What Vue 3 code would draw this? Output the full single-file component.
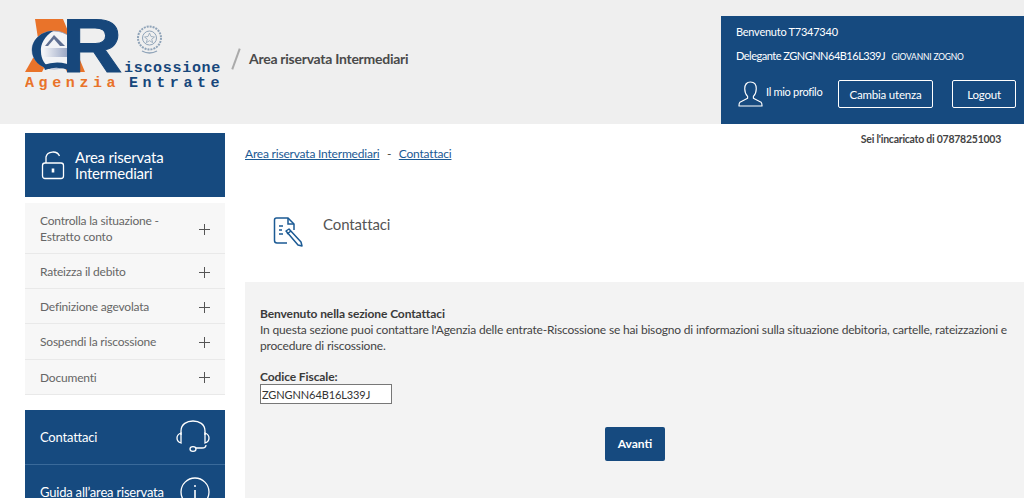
<template>
  <div class="page">
    <header class="top">
      <div class="brand">
        <svg class="logo" width="200" height="80" viewBox="0 0 200 80">
          <defs>
            <linearGradient id="eBar" x1="0" x2="1" y1="0" y2="0">
              <stop offset="0" stop-color="#f4f5f8" />
              <stop offset="1" stop-color="#7f8fb5" />
            </linearGradient>
          </defs>
          <path d="M10 4 H38 L60 57 H42 L30 30 H14 Z" fill="#e9732a" />
          <path d="M0 57 L8 43 L24 43 L17 57 Z" fill="#e9732a" />
          <ellipse cx="29" cy="35" rx="22" ry="19" fill="#f2f3f6" stroke="#8c9cbc" stroke-width=".8" />
          <path d="M7 35 C7 24 17 16 28 16 C20 21 15 29 16 37 C16 44 20 50 26 54 C15 53 7 45 7 35 Z" fill="#17477b" />
          <path d="M29 20 L40 31 L20 31 Z" fill="#5f6f92" />
          <path d="M29 24 L35 31 L23 31 Z" fill="#f2f3f6" />
          <rect x="18" y="33" width="32" height="9" fill="url(#eBar)" />
          <path d="M18 50 Q35 44 50 52 L46 56 Q32 50 20 55 Z" fill="#17477b" />
          <text transform="translate(37 57) scale(1.1 1)" class="logo-r">R</text>
          <text x="99" y="57" class="logo-small blue">iscossione</text>
          <text x="0" y="72" class="logo-small orange wide">Agenzia</text>
          <text x="104" y="72" class="logo-small blue wide">Entrate</text>
          <g fill="none" stroke="#8fa3b8" stroke-width="1.400">
            <circle cx="124.500" cy="23" r="11.500" stroke-width="2" stroke-dasharray="2 1" />
            <circle cx="124.500" cy="23" r="7" stroke-width="1" />
            <path d="M124.500 18 l1.500 3.500 3.500 .5 -2.800 2.200 1 3.500 -3.200 -2 -3.200 2 1 -3.500 -2.800 -2.200 3.500 -.5 Z" stroke-width=".8" />
            <path d="M117 36 q7.500 4 15 0" />
          </g>
        </svg>
        <span class="slash"></span>
        <span class="area-title">Area riservata Intermediari</span>
      </div>
      <div class="user-box">
        <p class="user-line welcome">Benvenuto T7347340</p>
        <p class="user-line">Delegante ZGNGNN64B16L339J <small>GIOVANNI ZOGNO</small></p>
        <div class="user-actions">
          <a class="profile">
            <svg width="25" height="26" viewBox="0 0 26 27" fill="none" stroke="#fff" stroke-width="1.200">
              <path d="M7 8 C7 3 10 1 13 1 C16 1 19 3 19 8 C19 12 17 15 16 16 L16 18 L24 22 Q25 23 25 26 L1 26 Q1 23 2 22 L10 18 L10 16 C9 15 7 12 7 8 Z" stroke-linejoin="round" />
            </svg>
            <span>Il mio profilo</span>
          </a>
          <button class="outline wide-btn">Cambia utenza</button>
          <button class="outline">Logout</button>
        </div>
      </div>
    </header>

    <div class="content">
      <aside class="side">
        <div class="side-head">
          <svg width="24" height="30" viewBox="0 0 24 30" fill="none" stroke="#fff" stroke-width="1.300">
            <rect x="1.500" y="13" width="21" height="15.500" rx="2.500" />
            <path d="M5 13 L5 7 A7 6 0 0 1 18.500 6" />
            <path d="M12 18.500 v4" stroke-width="2.600" />
          </svg>
          <span>Area riservata<br />Intermediari</span>
        </div>
        <ul class="menu">
          <li v-for="item in menu" :key="item" class="menu-item">
            <span>{{ item }}</span>
            <svg width="11" height="11" viewBox="0 0 11 11" stroke="#555" stroke-width="1"><path d="M5.500 0 V11 M0 5.500 H11" /></svg>
          </li>
        </ul>
        <div class="side-blue">
          <div class="blue-row first">
            <span>Contattaci</span>
            <svg width="34" height="34" viewBox="0 0 34 34" fill="none" stroke="#fff" stroke-width="1.300">
              <path d="M5 15 V11 C5 4 11 1 17 1 C23 1 29 4 29 11 V15" />
              <path d="M5 13 C2 14 1 16 1 18 C1 20 2 22 5 23 Z" />
              <path d="M29 13 C32 14 33 16 33 18 C33 20 32 22 29 23 Z" />
              <path d="M30 25 Q30 28 26 28 L20 28" />
              <ellipse cx="17" cy="29" rx="3" ry="2.300" />
            </svg>
          </div>
          <div class="blue-row">
            <span>Guida all’area riservata</span>
            <svg width="30" height="30" viewBox="0 0 30 30" fill="none" stroke="#fff" stroke-width="1.300">
              <circle cx="15" cy="15" r="14" />
              <path d="M15 13 V22" stroke-width="1.600" />
              <circle cx="15" cy="9" r="1" fill="#fff" stroke="none" />
            </svg>
          </div>
        </div>
      </aside>

      <main class="main">
        <p class="delegate">Sei l'incaricato di 07878251003</p>
        <nav class="crumbs">
          <a>Area riservata Intermediari</a>
          <span>-</span>
          <a>Contattaci</a>
        </nav>
        <div class="title-row">
          <svg width="30" height="30" viewBox="0 0 30 30" fill="none" stroke="#1b5a94" stroke-width="1.500">
            <path d="M14 26 L4 26 Q1.500 26 1.500 23.500 L1.500 3 Q1.500 1 3.500 1 L15 1 L21 7 L21 13" />
            <path d="M15 1 L15 7 L21 7" />
            <path d="M6 9 H10 M6 13 H9 M6 17 H10" />
            <path d="M13 14 L16 12 L28 25 L29 29 L25 28 Z" stroke-linejoin="round" />
            <path d="M14 17 L18 14" />
          </svg>
          <h1>Contattaci</h1>
        </div>
        <section class="panel">
          <strong>Benvenuto nella sezione Contattaci</strong>
          <p>In questa sezione puoi contattare l'Agenzia delle entrate-Riscossione se hai bisogno di informazioni sulla situazione debitoria, cartelle, rateizzazioni e procedure di riscossione.</p>
          <label for="cf">Codice Fiscale:</label>
          <input id="cf" value="ZGNGNN64B16L339J" />
          <div class="submit"><button class="primary">Avanti</button></div>
        </section>
      </main>
    </div>
  </div>
</template>

<script setup>
const menu = [
  'Controlla la situazione - Estratto conto',
  'Rateizza il debito',
  'Definizione agevolata',
  'Sospendi la riscossione',
  'Documenti'
]
</script>

<style>
html, body { margin: 0; overflow: hidden; background: #fff; }
</style>

<style scoped>
.page {
  height: 498px;
  overflow: hidden;
  font-family: Lato, "Open Sans", sans-serif;
  font-size: 12px;
  color: #444;
}

.top {
  display: flex;
  justify-content: space-between;
  align-items: flex-end;
  height: 124px;
  background: #efefef;
}

.brand {
  display: flex;
  align-items: flex-start;
  align-self: flex-start;
  padding: 15px 0 0 25px;
}

.logo { display: block; }
.logo-r { font: bold 76px "Liberation Sans", sans-serif; fill: #17477b; stroke: #17477b; stroke-width: 1px; }
.logo-small { font: bold 15px "Liberation Mono", monospace; letter-spacing: .7px; }
.logo-small.wide { letter-spacing: 4.600px; }
.blue { fill: #17477b; }
.orange { fill: #e9732a; }

.slash {
  width: 2px;
  height: 22px;
  margin: 33px 0 0 10px;
  background: #aaa;
  transform: rotate(20deg);
}

.area-title {
  margin: 35px 0 0 12px;
  font-size: 14px;
  font-weight: 700;
  letter-spacing: -.27px;
  color: #4a4a4a;
}

.user-box {
  box-sizing: border-box;
  width: 303px;
  height: 108px;
  padding: 9px 8px 0 15px;
  background: #164a7f;
  color: #fff;
}

.user-line {
  margin: 0 0 10px;
  line-height: 14px;
  font-size: 11px;
  letter-spacing: -.5px;
}

.user-line.welcome { letter-spacing: -.25px; }

.user-line small { margin-left: 4px; font-size: 8.500px; letter-spacing: -.2px; }

.user-actions {
  display: flex;
  align-items: center;
  margin-top: 16px;
}

.profile {
  display: flex;
  align-items: flex-start;
  gap: 3px;
  width: 102px;
  margin-left: 2px;
  margin-right: -2px;
  font-size: 11px;
  letter-spacing: -.3px;
}

.profile span { margin-top: 4px; }

.outline {
  width: 64px;
  height: 28px;
  margin-left: auto;
  border: 1px solid #fff;
  border-radius: 2px;
  background: transparent;
  color: #fff;
  font: inherit;
  font-size: 11.500px;
  letter-spacing: -.2px;
}

.wide-btn { width: 95px; margin: 0; }

.content {
  display: flex;
  gap: 20px;
  padding-left: 25px;
}

.side {
  flex: none;
  width: 200px;
  padding-top: 9px;
}

.side-head {
  display: flex;
  align-items: center;
  gap: 10px;
  height: 64px;
  padding-left: 16px;
  box-sizing: border-box;
  background: #164a7f;
  color: #fff;
  font-size: 15px;
  letter-spacing: -.2px;
  line-height: 16px;
}

.menu {
  list-style: none;
  margin: 6px 0 0;
  padding: 0;
  background: #f7f7f7;
}

.menu-item {
  display: flex;
  justify-content: space-between;
  align-items: center;
  box-sizing: border-box;
  min-height: 35.200px;
  padding: 10px 15px 8px;
  border-bottom: 1px solid #e9e9e9;
  line-height: 16px;
  letter-spacing: -.2px;
  color: #666;
}

.menu-item span { max-width: 130px; }

.side-blue {
  margin-top: 15px;
  background: #164a7f;
  color: #fff;
  font-size: 13px;
  letter-spacing: -.2px;
}

.blue-row {
  display: flex;
  justify-content: space-between;
  align-items: center;
  height: 55px;
  padding: 0 15px;
}

.blue-row.first { border-bottom: 1px solid #3a6a9a; height: 54px; }

.main {
  flex: 1;
  position: relative;
  min-width: 0;
}

.delegate {
  position: absolute;
  top: 9px;
  right: 23px;
  margin: 0;
  font-size: 10.500px;
  font-weight: 700;
  letter-spacing: -.25px;
}

.crumbs {
  display: flex;
  gap: 7.500px;
  padding-top: 23px;
  line-height: 14px;
  letter-spacing: -.2px;
  color: #444;
}

.crumbs a { color: #1b5a94; text-decoration: underline; }

.title-row {
  display: flex;
  align-items: flex-start;
  gap: 20px;
  height: 121px;
  box-sizing: border-box;
  padding: 56px 0 0 28px;
}

.title-row h1 {
  margin: -3px 0 0;
  font-size: 15px;
  font-weight: 400;
  line-height: 20px;
  letter-spacing: -.1px;
  color: #555;
}

.panel {
  height: 216px;
  box-sizing: border-box;
  padding: 24px 15px 0;
  background: #f3f3f3;
  letter-spacing: -.18px;
  line-height: 16px;
}

.panel strong { display: block; letter-spacing: -.1px; color: #3a3a3a; }
.panel p { margin: 0 0 16px; }

.panel label { display: block; font-weight: 700; line-height: 14px; letter-spacing: -.1px; color: #3a3a3a; }

.panel input {
  display: block;
  box-sizing: border-box;
  width: 132px;
  height: 20px;
  padding: 0 1px;
  border: 1px solid #777;
  background: #fff;
  color: #333;
  font: inherit;
  font-size: 11px;
  letter-spacing: -.1px;
  outline: none;
}

.submit { margin-top: 23px; padding-left: 345px; }

.primary {
  width: 60px;
  height: 34px;
  border: 0;
  border-radius: 2px;
  background: #164a7f;
  color: #fff;
  font: inherit;
  font-size: 12px;
  font-weight: 700;
  letter-spacing: 0;
}
</style>
